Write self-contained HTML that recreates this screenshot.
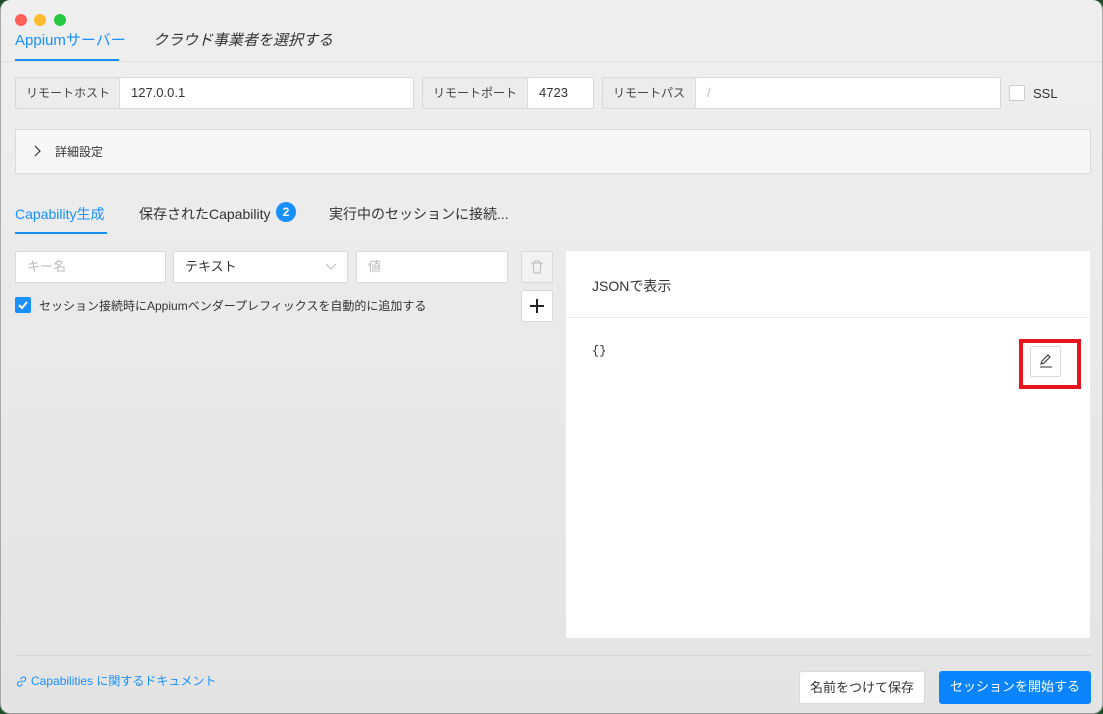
<!DOCTYPE html>
<html><head><meta charset="utf-8"><style>
*{box-sizing:border-box;margin:0;padding:0}
body{width:1103px;height:714px;overflow:hidden;background:#1f4f2a;font-family:"Liberation Sans","Noto Sans CJK JP",sans-serif;font-size:13px;color:#333;position:relative}
.win{position:absolute;left:0;top:0;width:1103px;height:714px;background:linear-gradient(#efefef,#e4e4e4);border-radius:10px;border-left:1px solid #aaa;border-right:1px solid #aaa;border-bottom:1px solid #999;overflow:hidden}
.a{position:absolute;white-space:nowrap}
.dot{position:absolute;top:14px;width:12px;height:12px;border-radius:50%}
.box{position:absolute;background:#fff;border:1px solid #d9d9d9;border-radius:2px;height:32px;line-height:30px;padding-left:11px;font-size:13px;white-space:nowrap;overflow:hidden}
.lab{background:#ececec;color:#444;padding:0 10px;font-size:12px}
.blue{color:#1890ff}
.btn{position:absolute;height:33px;line-height:31px;text-align:center;border-radius:3px;font-size:13px;white-space:nowrap}
</style></head><body>
<div class="win">
<div class="dot" style="left:14px;background:#fe5f57"></div>
<div class="dot" style="left:33px;background:#febc2e"></div>
<div class="dot" style="left:53px;background:#28c840"></div>
<div class="a blue" style="left:14px;top:29px;font-size:15px">Appiumサーバー</div>
<div class="a" style="left:14px;top:59px;width:104px;height:2px;background:#1890ff"></div>
<div class="a" style="left:152px;top:29px;font-size:15px;font-style:italic;color:#333">クラウド事業者を選択する</div>
<div class="a" style="left:0;top:61px;width:1103px;height:1px;background:#e0e0e0"></div>

<div class="box lab" style="left:14px;top:77px;width:105px">リモートホスト</div>
<div class="box" style="left:118px;top:77px;width:295px">127.0.0.1</div>
<div class="box lab" style="left:421px;top:77px;width:106px">リモートポート</div>
<div class="box" style="left:526px;top:77px;width:67px">4723</div>
<div class="box lab" style="left:601px;top:77px;width:94px">リモートパス</div>
<div class="box" style="left:694px;top:77px;width:306px;color:#bbb">/</div>
<div class="a" style="left:1008px;top:85px;width:16px;height:16px;background:#fff;border:1px solid #ccc;border-radius:2px"></div>
<div class="a" style="left:1032px;top:86px;font-size:13px">SSL</div>

<div class="a" style="left:14px;top:129px;width:1076px;height:45px;background:#f7f7f7;border:1px solid #d9d9d9;border-radius:2px"></div>
<svg class="a" style="left:32px;top:145px" width="10" height="12"><path d="M2 1l5 5-5 5" fill="none" stroke="#333" stroke-width="1.2"/></svg>
<div class="a" style="left:54px;top:143px;font-size:12px">詳細設定</div>

<div class="a blue" style="left:14px;top:204px;font-size:14px">Capability生成</div>
<div class="a" style="left:14px;top:232px;width:92px;height:2px;background:#1890ff"></div>
<div class="a" style="left:138px;top:204px;font-size:14px">保存されたCapability</div>
<div class="a" style="left:275px;top:202px;width:20px;height:20px;border-radius:50%;background:#1890ff;color:#fff;text-align:center;line-height:20px;font-size:12px;font-weight:bold">2</div>
<div class="a" style="left:328px;top:204px;font-size:14px">実行中のセッションに接続...</div>

<div class="box" style="left:14px;top:251px;width:151px;color:#bbb">キー名</div>
<div class="box" style="left:172px;top:251px;width:175px">テキスト</div>
<svg class="a" style="left:324px;top:263px" width="12" height="8"><path d="M1 1l5 5 5-5" fill="none" stroke="#bbb" stroke-width="1"/></svg>
<div class="box" style="left:355px;top:251px;width:152px;color:#bbb">値</div>
<div class="a" style="left:520px;top:251px;width:32px;height:32px;background:#f2f2f2;border:1px solid #d9d9d9;border-radius:2px"></div>
<svg class="a" style="left:529px;top:260px" width="14" height="14"><path d="M1 3h12M5 3V1h4v2M3 3l1 10h6l1-10" fill="none" stroke="#bbb" stroke-width="1.1"/></svg>
<div class="a" style="left:14px;top:297px;width:16px;height:16px;background:#1890ff;border-radius:2px"></div>
<svg class="a" style="left:16px;top:299px" width="12" height="12"><path d="M2 6l3 3 5-6" fill="none" stroke="#fff" stroke-width="2"/></svg>
<div class="a" style="left:38px;top:297px;font-size:12px">セッション接続時にAppiumベンダープレフィックスを自動的に追加する</div>
<div class="a" style="left:520px;top:290px;width:32px;height:32px;background:#fff;border:1px solid #d9d9d9;border-radius:2px"></div>
<svg class="a" style="left:529px;top:299px" width="14" height="14"><path d="M7 0v14M0 7h14" stroke="#222" stroke-width="2"/></svg>

<div class="a" style="left:565px;top:251px;width:524px;height:387px;background:#fff"></div>
<div class="a" style="left:565px;top:317px;width:524px;height:1px;background:#e8e8e8"></div>
<div class="a" style="left:591px;top:276px;font-size:14px">JSONで表示</div>
<div class="a" style="left:591px;top:344px;font-family:'Liberation Mono',monospace;font-size:12px">{}</div>
<div class="a" style="left:1018px;top:339px;width:62px;height:50px;border:4px solid #e8141e"></div>
<div class="a" style="left:1029px;top:346px;width:31px;height:31px;border:1px solid #d9d9d9;border-radius:2px;background:#fff"></div>
<svg class="a" style="left:1037px;top:353px" width="16" height="16"><path d="M3 11l1-3 6-6 2 2-6 6zM2 14h12" fill="none" stroke="#333" stroke-width="1.1"/></svg>

<div class="a" style="left:14px;top:655px;width:1076px;height:1px;background:#d5d5d5"></div>
<svg class="a" style="left:15px;top:676px" width="11" height="11"><path d="M4.5 6.5l2-2M3.5 5L2 6.5a2 2 0 003 3L6.5 8M7.5 6L9 4.5a2 2 0 00-3-3L4.5 3" fill="none" stroke="#1890ff" stroke-width="1.1"/></svg>
<div class="a blue" style="left:30px;top:672px;font-size:12px">Capabilities に関するドキュメント</div>
<div class="btn" style="left:798px;top:671px;width:126px;background:#fff;border:1px solid #d9d9d9;color:#333">名前をつけて保存</div>
<div class="btn" style="left:938px;top:671px;width:152px;background:#0a84ff;color:#fff">セッションを開始する</div>
</div>
</body></html>
